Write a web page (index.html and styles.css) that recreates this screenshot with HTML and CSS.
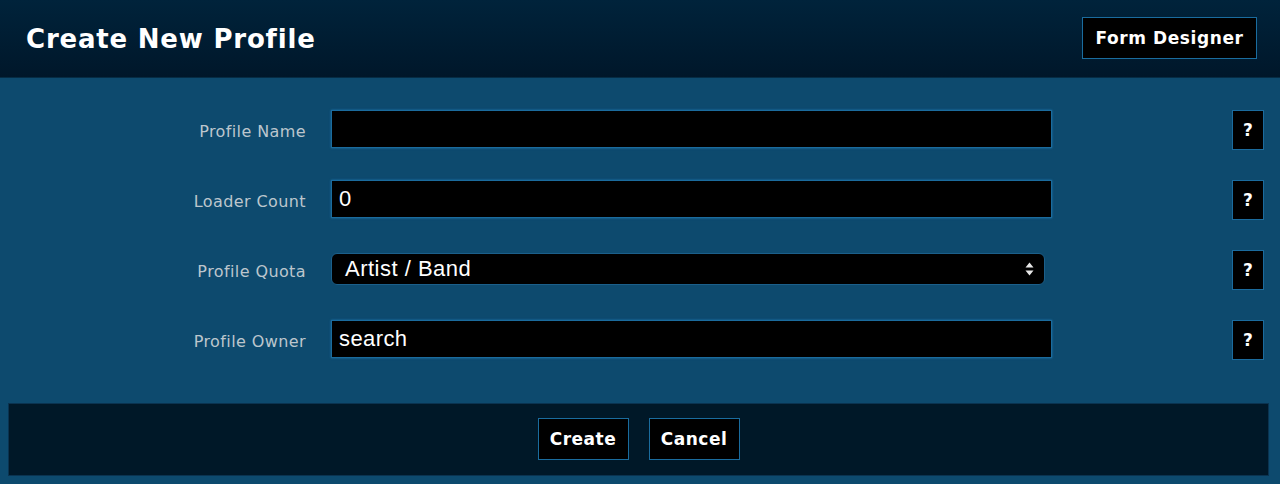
FILE: index.html
```html
<!DOCTYPE html>
<html>
<head>
<meta charset="utf-8">
<link rel="stylesheet" href="styles.css">
</head>
<body>
<header class="topbar">
  <h1 class="title">Create New Profile</h1>
  <button class="btn btn-designer">Form Designer</button>
</header>
<main class="panel">
  <form class="form">
    <label class="label">Profile Name</label>
    <input class="field" type="text" value="">
    <span class="spacer"></span>
    <button type="button" class="help">?</button>

    <label class="label">Loader Count</label>
    <input class="field" type="text" value="0">
    <span class="spacer"></span>
    <button type="button" class="help">?</button>

    <label class="label">Profile Quota</label>
    <div class="select">
      <span class="select-text">Artist / Band</span>
      <svg class="arrows" width="9" height="14" viewBox="0 0 9 14"><path d="M4.5 0.5 L8.5 5.5 L0.5 5.5 Z M4.5 13.5 L8.5 8.5 L0.5 8.5 Z" fill="#e8e8e8"/></svg>
    </div>
    <span class="spacer"></span>
    <button type="button" class="help">?</button>

    <label class="label">Profile Owner</label>
    <input class="field" type="text" value="search">
    <span class="spacer"></span>
    <button type="button" class="help">?</button>
  </form>
  <footer class="actions">
    <button type="button" class="btn btn-action">Create</button>
    <button type="button" class="btn btn-action">Cancel</button>
  </footer>
</main>
</body>
</html>
```

FILE: styles.css
```css
html, body {
  margin: 0;
  padding: 0;
}
body {
  background: #0d4a6e;
  width: 1280px;
  height: 484px;
  overflow: hidden;
  font-family: "DejaVu Sans", Verdana, sans-serif;
}
.topbar {
  height: 78px;
  box-sizing: border-box;
  background: linear-gradient(#00233b, #00172a);
  border-bottom: 1px solid #062c44;
  display: flex;
  align-items: center;
  justify-content: space-between;
  padding: 0 23px 0 26px;
}
.title {
  margin: 0;
  color: #ffffff;
  font-size: 26px;
  font-weight: bold;
  letter-spacing: 0.8px;
}
.btn {
  background: #000000;
  color: #ffffff;
  border: 1px solid #1a6c9e;
  font-family: "DejaVu Sans", Verdana, sans-serif;
  font-weight: bold;
  padding: 0;
  cursor: pointer;
}
.btn-designer {
  width: 175px;
  height: 42px;
  font-size: 17px;
  letter-spacing: 0.6px;
  margin-top: -1px;
}
.panel {
  padding-top: 32px;
}
.form {
  display: grid;
  grid-template-columns: 306px 721px 1fr 32px;
  column-gap: 25px;
  row-gap: 30px;
  padding-right: 16px;
  align-items: start;
}
.label {
  height: 38px;
  display: flex;
  align-items: center;
  justify-content: flex-end;
  color: #bcc6cd;
  font-size: 16px;
  letter-spacing: 0.4px;
  margin-top: 2px;
}
.field {
  box-sizing: border-box;
  height: 38px;
  width: 721px;
  margin: 0;
  background: #000000;
  border: 1px solid #1b6b9d;
  box-shadow: 0 0 2px #1d78b0;
  color: #ffffff;
  font-family: "Liberation Sans", Arial, sans-serif;
  font-size: 22px;
  letter-spacing: 0.4px;
  padding: 0 7px;
  outline: none;
}
.select {
  box-sizing: border-box;
  margin-top: 3px;
  height: 32px;
  width: 714px;
  background: #000000;
  border: 1px solid #1b5f8a;
  border-radius: 6px;
  display: flex;
  align-items: center;
  justify-content: space-between;
  padding: 0 10px 0 13px;
  color: #ffffff;
  font-family: "Liberation Sans", Arial, sans-serif;
  font-size: 22px;
  letter-spacing: 0.5px;
}
.arrows {
  display: block;
}
.help {
  box-sizing: border-box;
  width: 32px;
  height: 40px;
  background: #000000;
  border: 1px solid #1b6b9d;
  color: #ffffff;
  font-family: "DejaVu Sans", Verdana, sans-serif;
  font-weight: bold;
  font-size: 17px;
  padding: 0;
}
.actions {
  margin: 43px 11px 0 8px;
  height: 73px;
  box-sizing: border-box;
  background: #001828;
  border: 1px solid #0a3350;
  display: flex;
  justify-content: center;
  align-items: center;
  gap: 20px;
  padding-bottom: 2px;
}
.btn-action {
  width: 91px;
  height: 42px;
  font-size: 17px;
  letter-spacing: 0.5px;
}
```
